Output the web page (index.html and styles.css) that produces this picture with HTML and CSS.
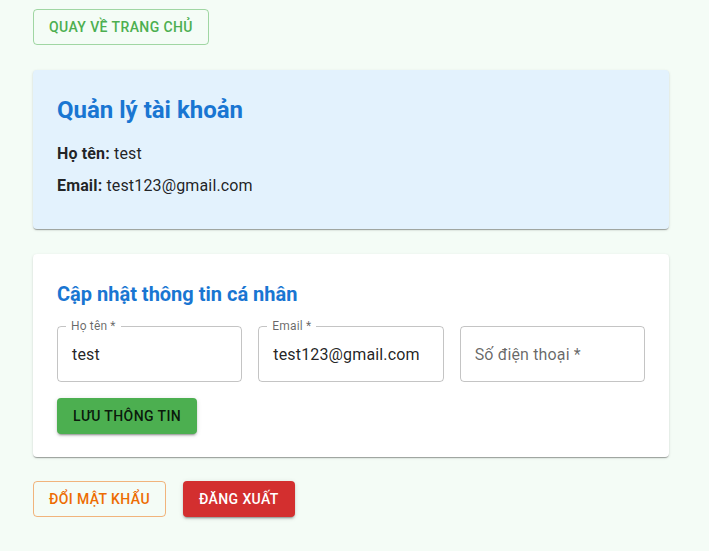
FILE: index.html
```html
<!DOCTYPE html>
<html lang="vi">
<head>
<meta charset="utf-8">
<link rel="stylesheet" href="styles.css">
</head>
<body>
<div class="page">
  <div class="top-row">
    <button class="btn btn-outlined-green">QUAY VỀ TRANG CHỦ</button>
  </div>

  <section class="card card-info">
    <h1 class="title-lg">Quản lý tài khoản</h1>
    <p class="info-line"><strong>Họ tên:</strong> test</p>
    <p class="info-line"><strong>Email:</strong> test123@gmail.com</p>
  </section>

  <section class="card card-form">
    <h2 class="title-md">Cập nhật thông tin cá nhân</h2>
    <div class="fields">
      <div class="field">
        <span class="field-label">Họ tên *</span>
        <span class="field-value">test</span>
      </div>
      <div class="field">
        <span class="field-label">Email *</span>
        <span class="field-value">test123@gmail.com</span>
      </div>
      <div class="field">
        <span class="field-value placeholder">Số điện thoại *</span>
      </div>
    </div>
    <div class="actions">
      <button class="btn btn-green">LƯU THÔNG TIN</button>
    </div>
  </section>

  <div class="bottom-row">
    <button class="btn btn-outlined-orange">ĐỔI MẬT KHẨU</button>
    <button class="btn btn-red">ĐĂNG XUẤT</button>
  </div>
</div>
</body>
</html>
```

FILE: styles.css
```css
* { box-sizing: border-box; }
html, body {
  margin: 0;
  padding: 0;
  background: #f4fcf6;
  font-family: Roboto, "Noto Sans", Arial, sans-serif;
  color: rgba(0,0,0,0.87);
}
.page {
  width: 636px;
  margin-left: 33px;
  padding-top: 9px;
  padding-bottom: 30px;
  display: flex;
  flex-direction: column;
  gap: 25px;
}
.top-row, .bottom-row, .actions {
  display: flex;
  gap: 17px;
}
.bottom-row { margin-top: -1px; }
.btn {
  font-family: Roboto, "Noto Sans", Arial, sans-serif;
  font-weight: 500;
  font-size: 14px;
  letter-spacing: 0.4px;
  line-height: 24px;
  height: 36px;
  border-radius: 4px;
  padding: 6px 16px;
  cursor: pointer;
  background: transparent;
  border: 0;
  white-space: nowrap;
}
.btn-outlined-green {
  border: 1px solid rgba(76,175,80,0.5);
  color: #4caf50;
  padding: 5px 15px;
}
.btn-outlined-orange {
  border: 1px solid rgba(237,108,2,0.5);
  color: #ed6c02;
  padding: 5px 15px;
}
.btn-green {
  background: #4caf50;
  color: rgba(0,0,0,0.87);
  box-shadow: 0 3px 1px -2px rgba(0,0,0,0.2), 0 2px 2px 0 rgba(0,0,0,0.14), 0 1px 5px 0 rgba(0,0,0,0.12);
}
.btn-red {
  background: #d32f2f;
  color: #fff;
  box-shadow: 0 3px 1px -2px rgba(0,0,0,0.2), 0 2px 2px 0 rgba(0,0,0,0.14), 0 1px 5px 0 rgba(0,0,0,0.12);
}
.card {
  border-radius: 4px;
  padding: 24px;
  box-shadow: 0 2px 1px -1px rgba(0,0,0,0.2), 0 1px 1px 0 rgba(0,0,0,0.14), 0 1px 3px 0 rgba(0,0,0,0.12);
}
.card-info {
  background: #e3f2fd;
  padding-bottom: 23px;
}
.card-form {
  background: #fff;
  padding-bottom: 23px;
}
.title-lg {
  margin: 0 0 16px;
  font-size: 24px;
  line-height: 32px;
  font-weight: 700;
  color: #1976d2;
}
.info-line {
  margin: 0 0 8px;
  font-size: 16px;
  line-height: 24px;
  letter-spacing: 0.15px;
}
.info-line strong { font-weight: 700; }
.title-md {
  margin: 0 0 16px;
  font-size: 20px;
  line-height: 32px;
  font-weight: 700;
  color: #1976d2;
}
.fields {
  display: grid;
  grid-template-columns: repeat(3, 1fr);
  gap: 16px;
  margin-bottom: 16px;
}
.field {
  position: relative;
  height: 56px;
  border: 1px solid rgba(0,0,0,0.23);
  border-radius: 4px;
  padding: 15.5px 14px;
}
.field-label {
  position: absolute;
  left: 8px;
  top: -8px;
  padding: 0 5px;
  background: #fff;
  font-size: 12px;
  line-height: 14px;
  letter-spacing: 0.15px;
  color: rgba(0,0,0,0.6);
}
.field-value {
  display: block;
  font-size: 16px;
  line-height: 23px;
  letter-spacing: 0.15px;
  color: rgba(0,0,0,0.87);
  white-space: nowrap;
}
.field-value.placeholder {
  color: rgba(0,0,0,0.6);
}
```
